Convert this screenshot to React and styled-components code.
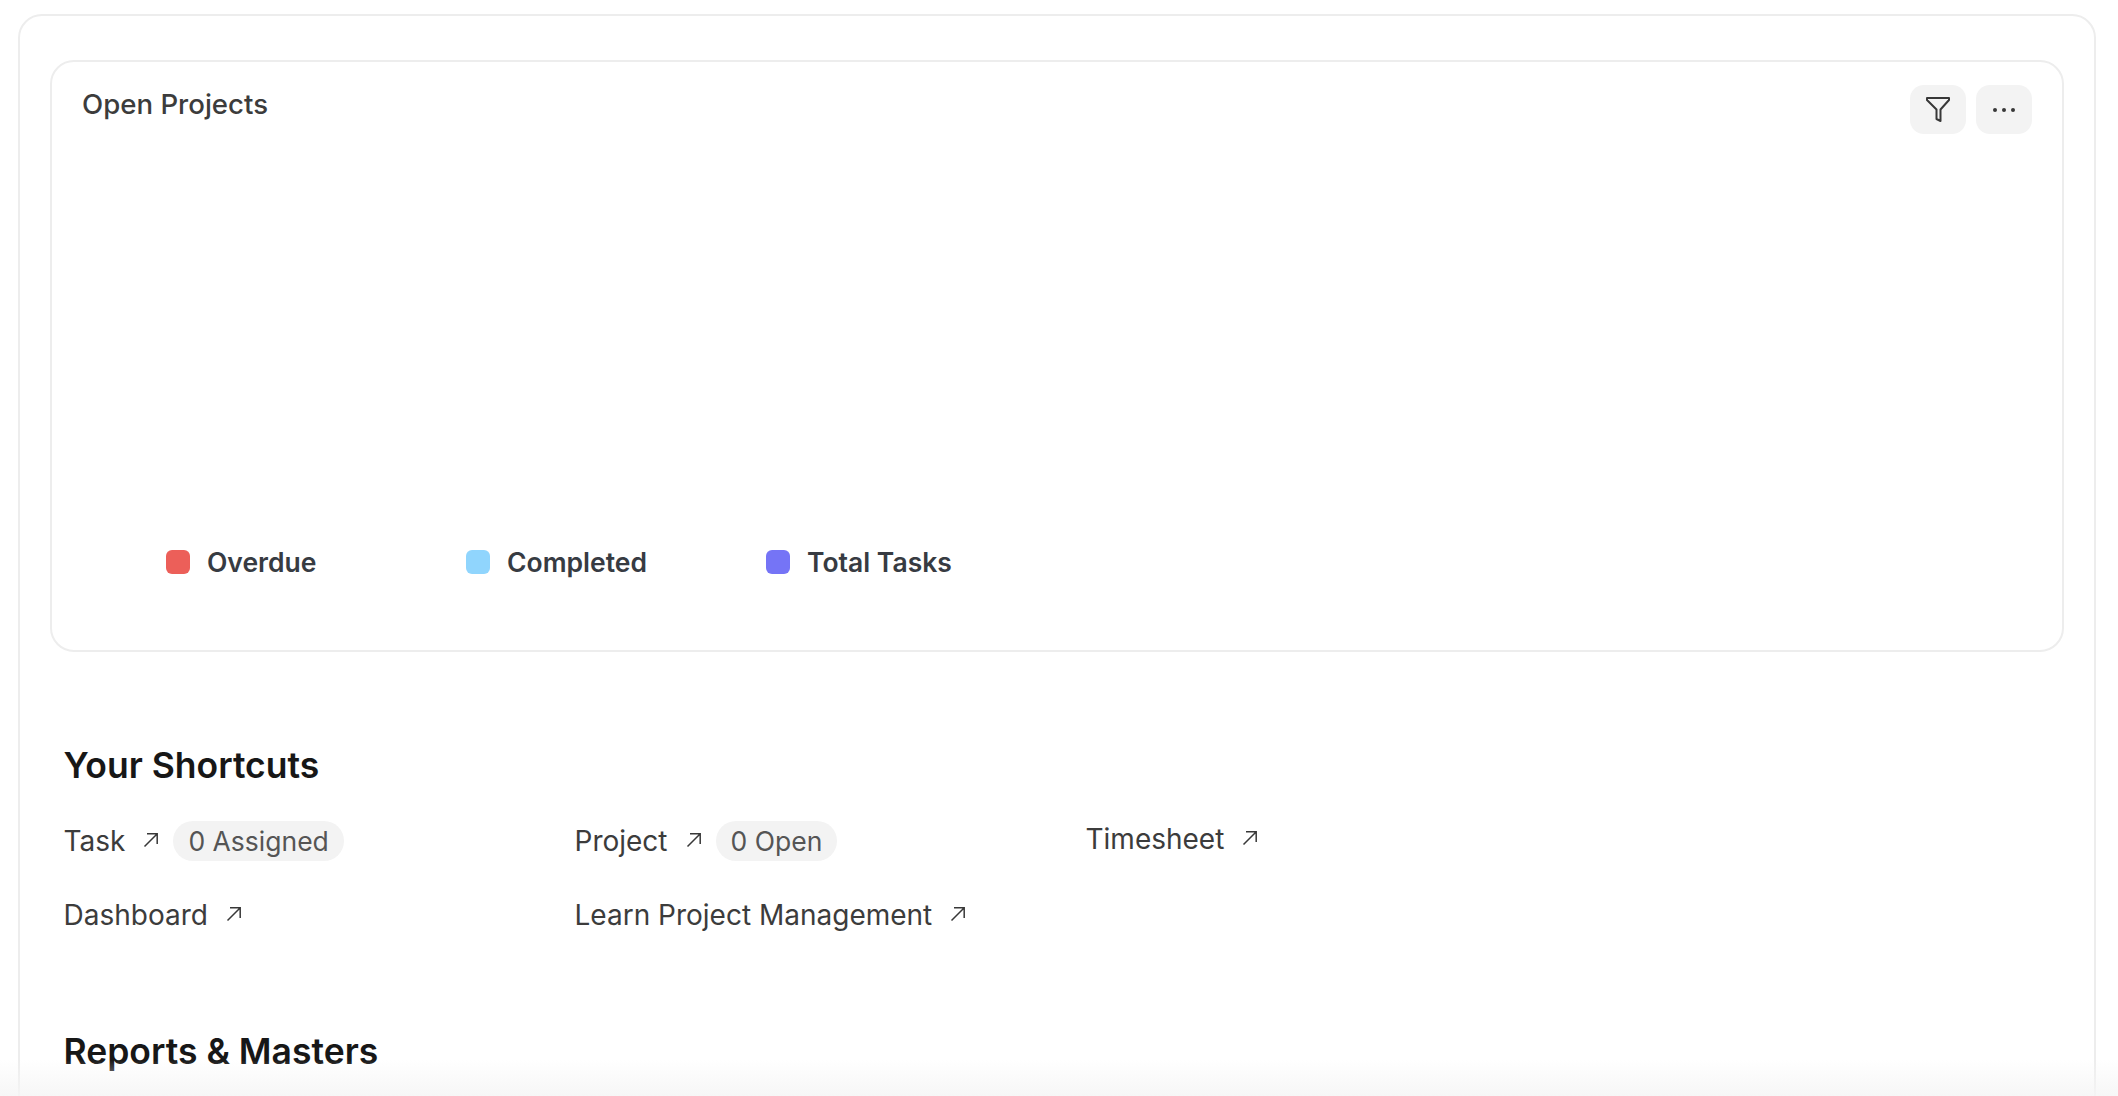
import React from "react";
import styled, { createGlobalStyle } from "styled-components";

const Global = createGlobalStyle`
  html, body { margin: 0; padding: 0; background: #fff; height: 100%; overflow: hidden; }
  * { box-sizing: border-box; }
  body { font-family: Inter, "Liberation Sans", sans-serif; }
`;

const Page = styled.div`
  position: relative;
  height: 1096px;
  overflow: hidden;
  padding: 14px 22px 0 18px;
`;
const Fade = styled.div`
  position: absolute;
  left: 0; right: 0; bottom: 0;
  height: 36px;
  background: linear-gradient(to bottom, rgba(245,245,245,0), rgba(245,245,245,0.85));
  pointer-events: none;
`;
const Outer = styled.div`
  border: 2px solid #ededed;
  border-radius: 24px;
  height: 1200px;
  padding: 44px 30px 0 30px;
`;
const ChartCard = styled.section`
  position: relative;
  height: 592px;
  border: 2px solid #ededed;
  border-radius: 24px;
  padding: 26px 30px 0;
`;
const ChartHead = styled.div`
  display: flex;
  justify-content: space-between;
  align-items: flex-start;
`;
const ChartTitle = styled.h3`
  margin: 0;
  font-size: 27.6px;
  line-height: 32px;
  font-weight: 500;
  color: #3c3c3c;
`;
const Actions = styled.div`
  display: flex;
  gap: 10px;
  margin-top: -3px;
`;
const IconBtn = styled.div`
  width: 56px;
  height: 49px;
  border-radius: 14px;
  background: #f3f3f3;
  display: flex;
  align-items: center;
  justify-content: center;
  color: #383838;
`;
const Legend = styled.div`
  display: flex;
  margin: 0 0 0 84px;
  padding-top: 411px;
`;
const LegendItem = styled.div`
  width: 300px;
  display: flex;
  align-items: center;
  gap: 17px;
  font-size: 26.5px;
  line-height: 34px;
  font-weight: 600;
  color: #373b42;
`;
const Swatch = styled.span`
  width: 24px;
  height: 24px;
  border-radius: 6px;
  background: ${(p) => p.$color};
`;
const Section = styled.section`
  padding: 0 0 0 13.5px;
  margin-top: ${(p) => p.$top}px;
`;
const Heading = styled.h2`
  margin: 0;
  font-size: 35.5px;
  line-height: 44px;
  font-weight: 600;
  color: #171717;
`;
const ShortcutGrid = styled.div`
  display: grid;
  grid-template-columns: repeat(3, 511px);
  grid-auto-rows: 74px;
  margin-top: 33px;
`;
const Shortcut = styled.div`
  display: flex;
  align-items: flex-start;
  height: 40px;
  font-size: 28px;
  line-height: 40px;
  color: #3c3c3c;
  margin-top: ${(p) => p.$shift || 0}px;
`;
const Arrow = styled.svg`
  width: 20px;
  height: 20px;
  margin: 9px 0 0 16px;
  flex: none;
  color: #383838;
`;
const Pill = styled.span`
  margin-left: 12px;
  height: 40px;
  padding: 0 15px;
  border-radius: 20px;
  background: #f3f3f3;
  color: #555555;
  font-size: 26.5px;
`;

const ArrowIcon = () => (
  <Arrow viewBox="0 0 20 20" fill="none" stroke="currentColor" strokeWidth="1.5">
    <path d="M3.5 16.5 L16 4 M6 3.8 H16.2 V14" />
  </Arrow>
);

const legend = [
  ["Overdue", "#ec5f59"],
  ["Completed", "#90d5fd"],
  ["Total Tasks", "#7574f6"],
];
const shortcuts = [
  { name: "Task", pill: "0 Assigned" },
  { name: "Project", pill: "0 Open" },
  { name: "Timesheet", shift: -2 },
  { name: "Dashboard" },
  { name: "Learn Project Management" },
];

export default function App() {
  return (
    <>
      <Global />
      <Page>
        <Outer>
          <ChartCard>
            <ChartHead>
              <ChartTitle>Open Projects</ChartTitle>
              <Actions>
                <IconBtn>
                  <svg width="28" height="28" viewBox="0 0 28 28" fill="none" stroke="currentColor" strokeWidth="2" strokeLinejoin="round">
                    <path d="M3 2 H25 V4 L16.5 13.5 V25 L12.5 23 V13.5 L3 4 Z" />
                  </svg>
                </IconBtn>
                <IconBtn>
                  <svg width="24" height="6" viewBox="0 0 24 6" fill="currentColor">
                    <circle cx="3" cy="3" r="2" />
                    <circle cx="12" cy="3" r="2" />
                    <circle cx="21" cy="3" r="2" />
                  </svg>
                </IconBtn>
              </Actions>
            </ChartHead>
            <Legend>
              {legend.map(([label, color]) => (
                <LegendItem key={label}>
                  <Swatch $color={color} />
                  {label}
                </LegendItem>
              ))}
            </Legend>
          </ChartCard>
          <Section $top={92}>
            <Heading>Your Shortcuts</Heading>
            <ShortcutGrid>
              {shortcuts.map((s) => (
                <Shortcut key={s.name} $shift={s.shift}>
                  {s.name}
                  <ArrowIcon />
                  {s.pill && <Pill>{s.pill}</Pill>}
                </Shortcut>
              ))}
            </ShortcutGrid>
          </Section>
          <Section $top={61}>
            <Heading>Reports &amp; Masters</Heading>
          </Section>
        </Outer>
        <Fade />
      </Page>
    </>
  );
}
